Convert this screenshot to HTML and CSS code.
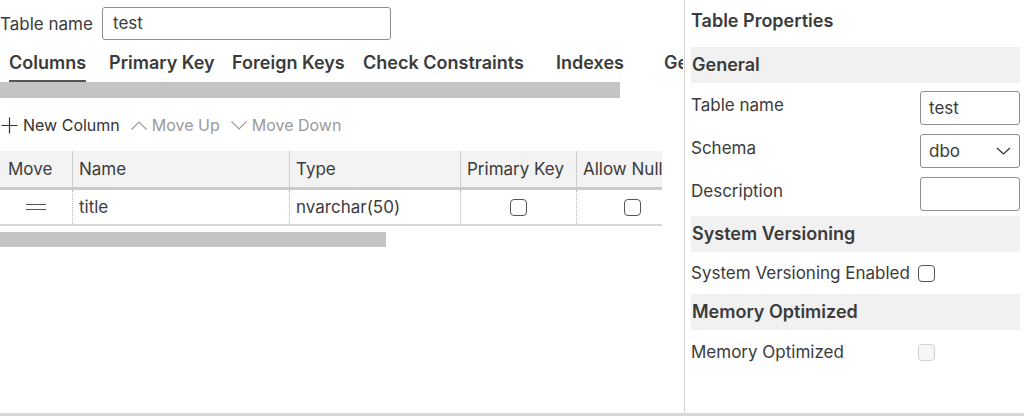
FILE: index.html
```html
<!DOCTYPE html>
<html lang="en">
<head>
    <meta charset="UTF-8">
    <title>Table Designer</title>
    <link rel="stylesheet" href="styles.css">
</head>
<body>
    <div class="designer">
        <div class="main-pane">
            <div class="name-row">
                <label class="name-label">Table name</label>
                <div class="name-input">test</div>
            </div>

            <div class="tabs">
                <div class="tab active tab-columns">Columns</div>
                <div class="tab tab-pk">Primary Key</div>
                <div class="tab tab-fk">Foreign Keys</div>
                <div class="tab tab-check">Check Constraints</div>
                <div class="tab tab-indexes">Indexes</div>
                <div class="tab tab-general">General</div>
            </div>
            <div class="scroll-thumb wide"></div>

            <div class="toolbar">
                <span class="tool">
                    <svg width="17" height="17" viewBox="0 0 17 17"><path d="M8.5 0.5v16M0.5 8.5h16" stroke="#333" stroke-width="1.2" fill="none"/></svg>
                    New Column
                </span>
                <span class="tool disabled">
                    <svg width="16" height="9" viewBox="0 0 16 9"><path d="M0.5 8.5L8 1l7.5 7.5" stroke="#999" stroke-width="1.1" fill="none"/></svg>
                    Move Up
                </span>
                <span class="tool disabled">
                    <svg width="16" height="9" viewBox="0 0 16 9"><path d="M0.5 0.5L8 8l7.5-7.5" stroke="#999" stroke-width="1.1" fill="none"/></svg>
                    Move Down
                </span>
            </div>

            <div class="grid">
                <div class="grid-head">
                    <div class="cell c-move">Move</div>
                    <div class="cell c-name">Name</div>
                    <div class="cell c-type">Type</div>
                    <div class="cell c-pk">Primary Key</div>
                    <div class="cell c-null">Allow Null</div>
                </div>
                <div class="grid-row">
                    <div class="cell c-move"><span class="handle"></span></div>
                    <div class="cell c-name">title</div>
                    <div class="cell c-type">nvarchar(50)</div>
                    <div class="cell c-pk center"><span class="check"></span></div>
                    <div class="cell c-null center"><span class="check"></span></div>
                </div>
            </div>
            <div class="scroll-thumb short"></div>
        </div>

        <div class="side-pane">
            <div class="side-title">Table Properties</div>

            <div class="section-head">General</div>
            <div class="fields">
                <div class="field">
                    <span>Table name</span>
                    <div class="box">test</div>
                </div>
                <div class="field">
                    <span>Schema</span>
                    <div class="box select">dbo
                        <svg width="15" height="8" viewBox="0 0 15 8"><path d="M1 1l6.5 6 6.5-6" stroke="#333" stroke-width="1.2" fill="none"/></svg>
                    </div>
                </div>
                <div class="field">
                    <span>Description</span>
                    <div class="box"></div>
                </div>
            </div>

            <div class="section-head">System Versioning</div>
            <div class="check-row">
                <span>System Versioning Enabled</span>
                <span class="check"></span>
            </div>

            <div class="section-head">Memory Optimized</div>
            <div class="check-row tall">
                <span class="label-fixed">Memory Optimized</span>
                <span class="check off"></span>
            </div>
        </div>
    </div>
</body>
</html>
```

FILE: styles.css
```css
body {
    margin: 0;
    font-family: Inter, "Noto Sans", sans-serif;
    font-size: 17px;
    color: #3b3b3b;
    background-color: #fff;
}
.designer {
    display: flex;
    height: 413px;
    border-bottom: 3px solid #d8d8d8;
    overflow: hidden;
}
.main-pane {
    width: 684px;
    border-right: 1px solid #d4d4d4;
    overflow: hidden;
    flex-shrink: 0;
}
.name-row {
    display: flex;
    align-items: center;
    height: 33px;
    margin-top: 7px;
}
.name-label {
    width: 102px;
}
.name-input {
    width: 277px;
    height: 31px;
    border: 1px solid #8f8f8f;
    border-radius: 3px;
    padding: 0 0 0 10px;
    line-height: 31px;
}
.tabs {
    display: flex;
    height: 41px;
    margin-top: 1px;
    padding-left: 9px;
    white-space: nowrap;
    overflow: hidden;
}
.tab {
    font-weight: 600;
    font-size: 18px;
    display: flex;
    align-items: center;
    height: 35px;
    padding-top: 4px;
    flex-shrink: 0;
}
.tab.active {
    border-bottom: 2px solid #555;
}
.tab-columns { margin-right: 23px; }
.tab-pk { width: 123px; }
.tab-fk { width: 131px; }
.tab-check { width: 193px; }
.tab-indexes { width: 108px; }
.tab-general {
    width: 19px;
    overflow: hidden;
    display: block;
    line-height: 35px;
}
.scroll-thumb {
    background-color: #c4c4c4;
    height: 16px;
}
.scroll-thumb.wide {
    width: 620px;
}
.scroll-thumb.short {
    width: 386px;
    height: 15px;
    margin-top: 6px;
}
.toolbar {
    display: flex;
    align-items: center;
    height: 30px;
    margin-top: 12px;
    font-size: 16px;
    gap: 10px;
}
.tool {
    display: flex;
    align-items: center;
    gap: 5px;
    color: #333;
}
.tool svg {
    margin-left: 1px;
}
.tool.disabled {
    color: #9a9a9a;
}
.grid {
    margin-top: 11px;
    width: 662px;
}
.grid-head {
    display: flex;
    background-color: #f3f3f3;
    height: 36px;
    border-bottom: 3px solid #cbcbcb;
}
.grid-row {
    display: flex;
    height: 34px;
    border-bottom: 2px solid #d8d8d8;
}
.cell {
    display: flex;
    align-items: center;
    padding-left: 6px;
    white-space: nowrap;
    overflow: hidden;
    box-sizing: border-box;
}
.grid-head .cell + .cell {
    border-left: 1px solid #cfcfcf;
}
.grid-row .cell + .cell {
    border-left: 1px dotted #b5b5b5;
}
.c-move { width: 72px; padding-left: 8px; }
.c-name { width: 217px; }
.c-type { width: 171px; }
.c-pk { width: 116px; }
.c-null { width: 86px; }
.center {
    justify-content: center;
    padding-left: 0;
}
.grid-row .c-null {
    justify-content: flex-start;
    padding-left: 47px;
}
.handle {
    display: block;
    width: 20px;
    height: 4px;
    border-top: 1.5px solid #555;
    border-bottom: 1.5px solid #555;
    margin-left: 18px;
}
.check {
    display: inline-block;
    width: 15px;
    height: 15px;
    border: 1.5px solid #555;
    border-radius: 4px;
    background-color: #fff;
}
.check.off {
    border-color: #d2d2d2;
    background-color: #f6f6f6;
}
.side-pane {
    flex: 1;
    padding: 0 4px 0 6px;
}
.side-title {
    font-weight: 600;
    font-size: 18px;
    height: 47px;
    line-height: 41px;
}
.section-head {
    background-color: #f1f1f1;
    font-weight: 600;
    font-size: 18px;
    height: 36px;
    line-height: 36px;
    padding-left: 1px;
}
.fields {
    padding: 3px 0 1px;
}
.field {
    display: flex;
    justify-content: space-between;
    align-items: center;
    height: 43px;
}
.field span {
    margin-top: -6px;
}
.box {
    width: 82px;
    height: 32px;
    border: 1px solid #8f8f8f;
    border-radius: 3px;
    padding: 0 8px;
    line-height: 32px;
    font-size: 17px;
    display: flex;
    align-items: center;
    justify-content: space-between;
}
.check-row {
    display: flex;
    align-items: center;
    gap: 8px;
    height: 42px;
}
.check-row.tall {
    height: 44px;
}
.label-fixed {
    width: 219px;
}
```
